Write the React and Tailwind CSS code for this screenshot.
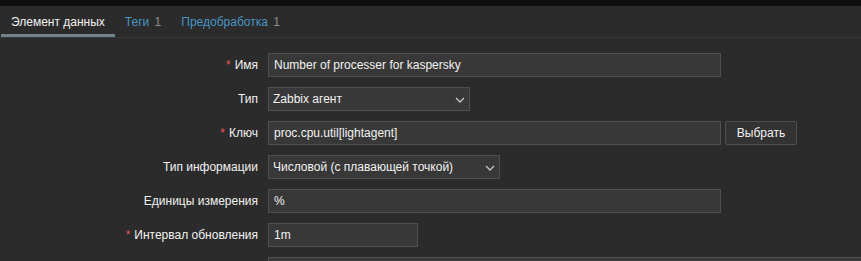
import React from "react";

const Chevron = () => (
  <svg width="10" height="6" viewBox="0 0 10 6" className="absolute right-[4px] top-[9px]">
    <path d="M1 1 L5 5 L9 1" fill="none" stroke="#c8c8c8" strokeWidth="1.3" />
  </svg>
);

const Label = ({ children, req }) => (
  <div className="flex h-[24px] items-center justify-end text-[12px] text-[#f2f2f2]">
    {req && <span className="mr-[4px] text-[#e45959]">*</span>}
    {children}
  </div>
);

const Input = ({ w, children }) => (
  <div
    className="flex h-[24px] items-center border border-[#4f4f4f] bg-[#383838] pl-[5px] text-[12px] text-[#f2f2f2]"
    style={{ width: w }}
  >
    {children}
  </div>
);

const Select = ({ w, children }) => (
  <div
    className="relative flex h-[24px] items-center border border-[#4f4f4f] bg-[#383838] pl-[4px] text-[12px] text-[#f2f2f2]"
    style={{ width: w }}
  >
    {children}
    <Chevron />
  </div>
);

export default function App() {
  return (
    <div className="h-[261px] w-[861px] overflow-hidden bg-[#2b2b2b] font-['Liberation_Sans',Arial,sans-serif]">
      <div className="h-[6px] bg-[#0e0f11]" />
      <div className="flex border-b border-[#383838] pl-[1px] text-[12px]">
        <div className="h-[31px] border-b-[3px] border-[#71838c] px-[10px] pt-[9px] leading-[14px] text-[#f2f2f2]">
          Элемент данных
        </div>
        <div className="h-[31px] px-[10px] pt-[9px] leading-[14px] text-[#4796c4]">
          Теги <span className="ml-[2px] text-[#8c8c8c]">1</span>
        </div>
        <div className="h-[31px] px-[10px] pt-[9px] leading-[14px] text-[#4796c4]">
          Предобработка <span className="ml-[2px] text-[#8c8c8c]">1</span>
        </div>
      </div>
      <div className="grid grid-cols-[258px_auto] gap-x-[10px] gap-y-[10px] pt-[15px]">
        <Label req>Имя</Label>
        <Input w={453}>Number of processer for kaspersky</Input>

        <Label>Тип</Label>
        <Select w={202}>Zabbix агент</Select>

        <Label req>Ключ</Label>
        <div className="flex gap-[4px]">
          <Input w={453}>proc.cpu.util[lightagent]</Input>
          <div className="flex h-[24px] w-[72px] items-center justify-center rounded-[2px] border border-[#4f4f4f] bg-[#333333] text-[12px] text-[#f2f2f2]">
            Выбрать
          </div>
        </div>

        <Label>Тип информации</Label>
        <Select w={232}>Числовой (с плавающей точкой)</Select>

        <Label>Единицы измерения</Label>
        <Input w={453}>%</Input>

        <Label req>Интервал обновления</Label>
        <Input w={150}>1m</Input>

        <div />
        <div className="h-[24px] w-[600px] border border-[#4f4f4f] bg-[#383838]" />
      </div>
    </div>
  );
}
